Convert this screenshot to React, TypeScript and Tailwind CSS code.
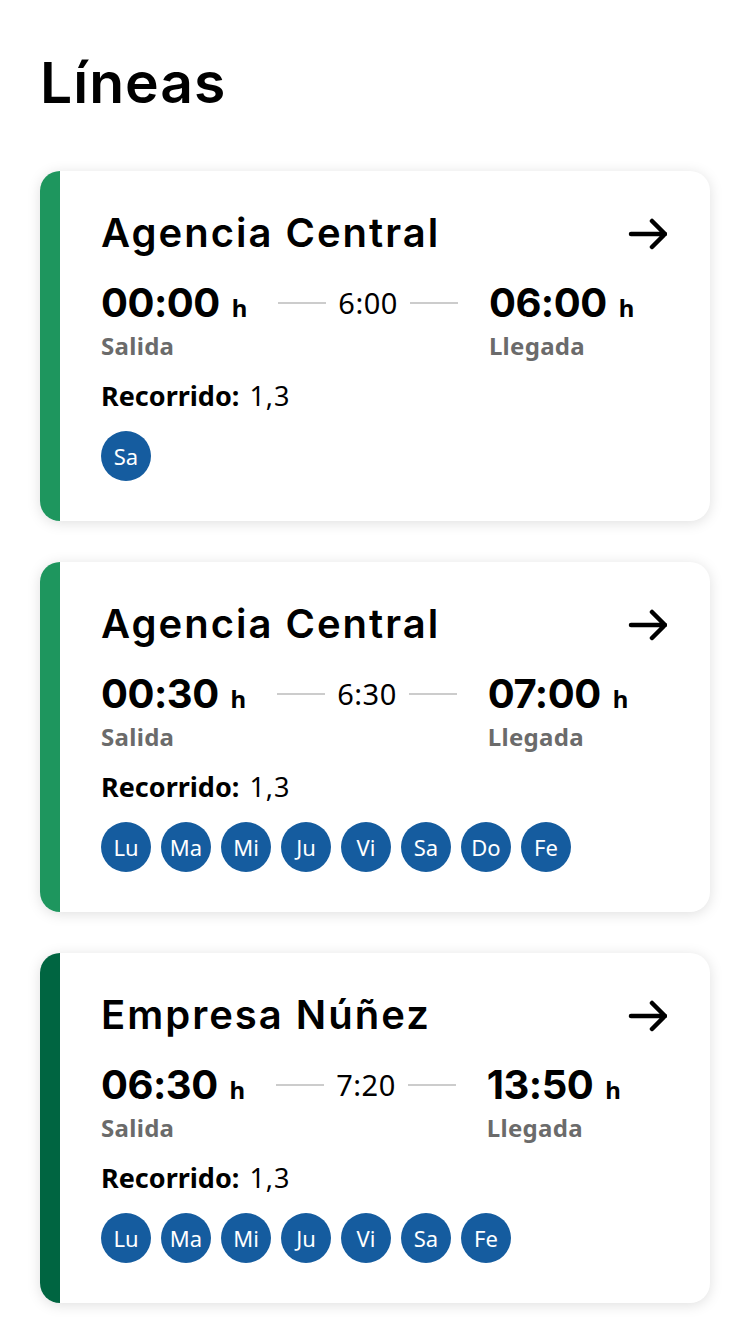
import React from "react";

type Line = {
  color: string;
  company: string;
  dep: string;
  arr: string;
  dur: string;
  route: string;
  days: string[];
};

const lines: Line[] = [
  { color: "bg-[#1e965e]", company: "Agencia Central", dep: "00:00", arr: "06:00", dur: "6:00", route: "1,3", days: ["Sa"] },
  { color: "bg-[#1e965e]", company: "Agencia Central", dep: "00:30", arr: "07:00", dur: "6:30", route: "1,3", days: ["Lu", "Ma", "Mi", "Ju", "Vi", "Sa", "Do", "Fe"] },
  { color: "bg-[#006541]", company: "Empresa Núñez", dep: "06:30", arr: "13:50", dur: "7:20", route: "1,3", days: ["Lu", "Ma", "Mi", "Ju", "Vi", "Sa", "Fe"] },
];

const heading = { fontFamily: "Inter, 'Noto Sans', sans-serif" };
const body = { fontFamily: "'Noto Sans', 'Open Sans', sans-serif" };

function Arrow() {
  return (
    <svg width="40" height="40" viewBox="0 0 40 40" fill="none" className="shrink-0">
      <path d="M4 20H38M25 7L38 20L25 33" stroke="#000" strokeWidth="4.5" strokeLinecap="round" strokeLinejoin="round" />
    </svg>
  );
}

function Time({ t, label }: { t: string; label: string }) {
  return (
    <div className="flex flex-col">
      <div className="flex items-baseline gap-[12px]">
        <span className="text-[40px] font-bold leading-none text-black tracking-[-0.5px]" style={heading}>{t}</span>
        <span className="text-[24px] font-bold leading-none text-black" style={body}>h</span>
      </div>
      <span className="mt-[11px] text-[24px] font-bold leading-none text-[#6b6b6b] tracking-[0.3px]" style={body}>{label}</span>
    </div>
  );
}

function Card({ l }: { l: Line }) {
  return (
    <div className="flex h-[350px] overflow-hidden rounded-[20px] bg-white shadow-[0_2px_14px_rgba(0,0,0,0.13)]">
      <div className={`w-[20px] shrink-0 ${l.color}`} />
      <div className="flex flex-1 flex-col pl-[41px] pr-[43px] pt-[40px]">
        <div className="flex items-center justify-between">
          <h2 className="text-[40px] font-semibold leading-none text-black tracking-[2px]" style={heading}>{l.company}</h2>
          <div className="mt-[3px]"><Arrow /></div>
        </div>
        <div className="mt-[29px] flex items-start gap-[31px]">
          <Time t={l.dep} label="Salida" />
          <div className="flex items-center gap-[12px] pt-[5px]">
            <div className="h-[2px] w-[48px] bg-[#cccccc]" />
            <span className="text-[29px] leading-none text-black tracking-[0.5px]" style={body}>{l.dur}</span>
            <div className="h-[2px] w-[48px] bg-[#cccccc]" />
          </div>
          <Time t={l.arr} label="Llegada" />
        </div>
        <div className="mt-[24px] text-[27px] leading-none text-black" style={body}>
          <span className="font-bold">Recorrido:</span>
          <span className="ml-[10px] tracking-[1px]">{l.route}</span>
        </div>
        <div className="mt-[22px] flex gap-[10px]">
          {l.days.map((d) => (
            <div key={d} className="flex h-[50px] w-[50px] items-center justify-center rounded-full bg-[#155c9f] text-[22px] text-white" style={body}>
              {d}
            </div>
          ))}
        </div>
      </div>
    </div>
  );
}

export default function App() {
  return (
    <div className="min-h-[1334px] w-[750px] bg-white">
      <h1 className="px-[40px] pt-[54px] text-[57px] font-semibold leading-none text-black tracking-[1px]" style={heading}>
        Líneas
      </h1>
      <div className="mt-[60px] flex flex-col gap-[41px] px-[40px]">
        {lines.map((l, i) => (
          <Card key={i} l={l} />
        ))}
      </div>
    </div>
  );
}
